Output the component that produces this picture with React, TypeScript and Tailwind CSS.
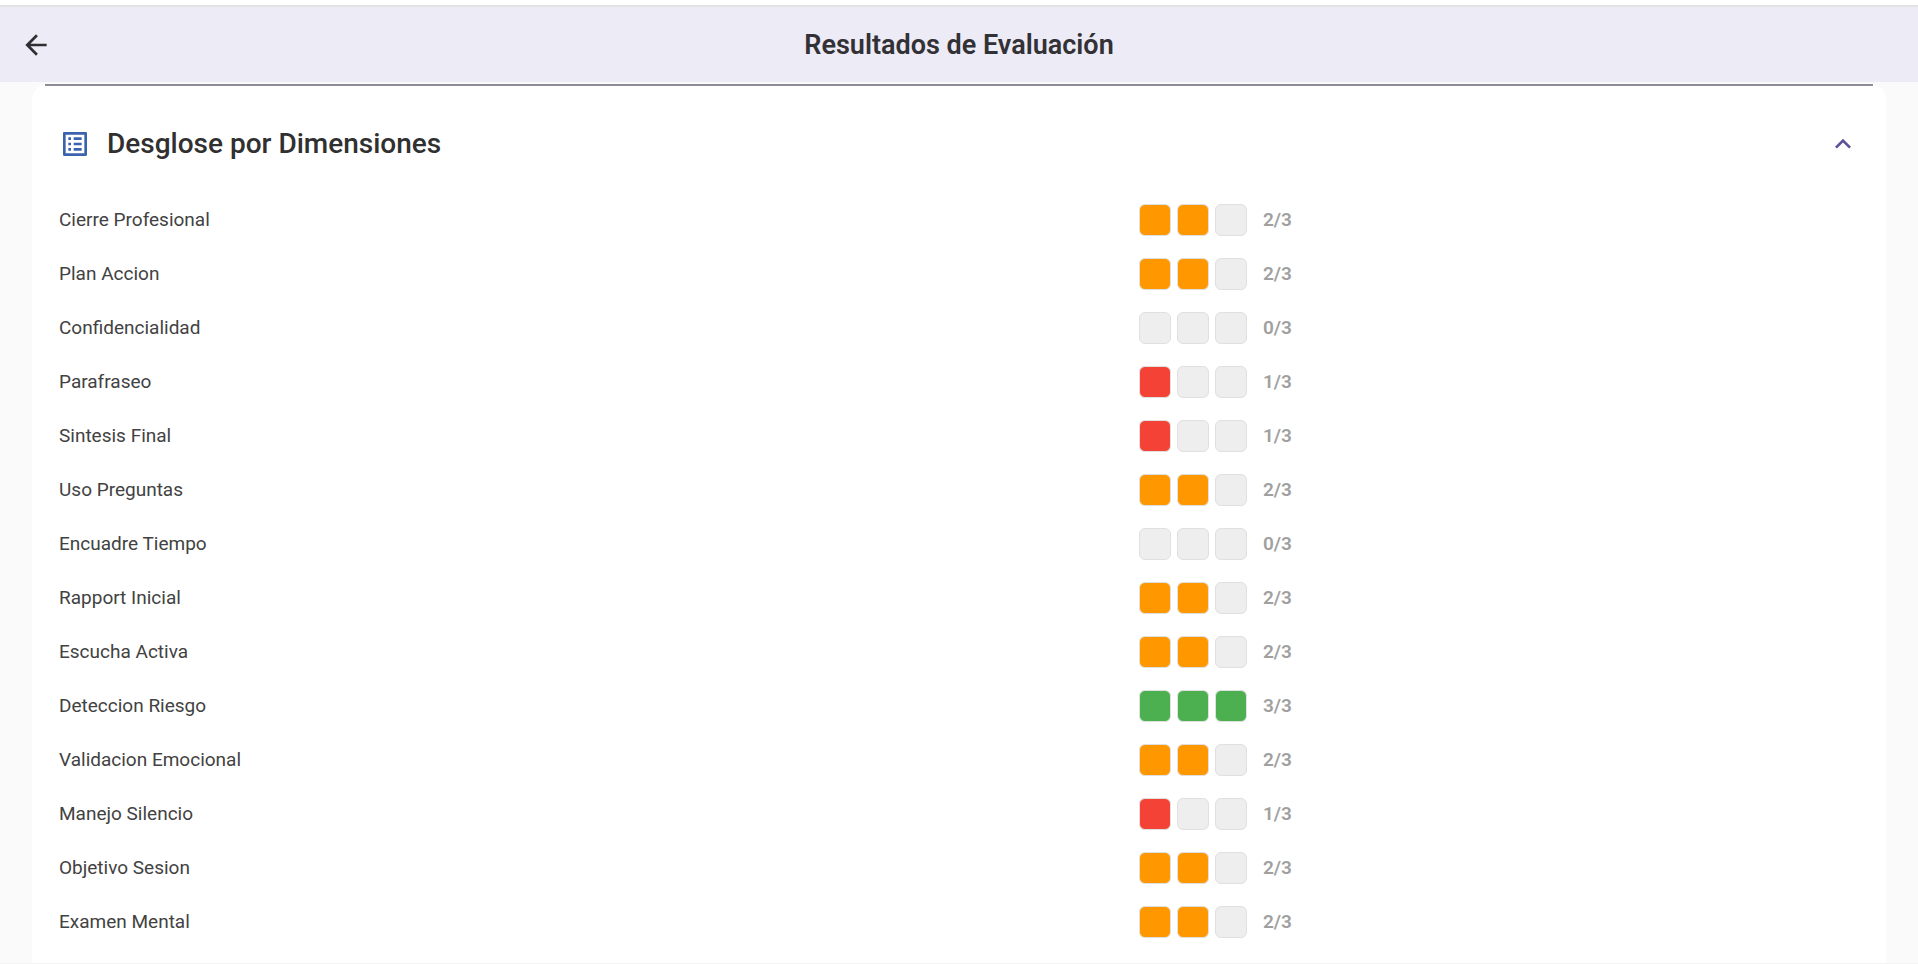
import { MdArrowBack, MdExpandLess, MdListAlt } from "react-icons/md"

interface Dimension {
  name: string
  score: number
}

const MAX_SCORE = 3

const dimensions: Dimension[] = [
  { name: "Cierre Profesional", score: 2 },
  { name: "Plan Accion", score: 2 },
  { name: "Confidencialidad", score: 0 },
  { name: "Parafraseo", score: 1 },
  { name: "Sintesis Final", score: 1 },
  { name: "Uso Preguntas", score: 2 },
  { name: "Encuadre Tiempo", score: 0 },
  { name: "Rapport Inicial", score: 2 },
  { name: "Escucha Activa", score: 2 },
  { name: "Deteccion Riesgo", score: 3 },
  { name: "Validacion Emocional", score: 2 },
  { name: "Manejo Silencio", score: 1 },
  { name: "Objetivo Sesion", score: 2 },
  { name: "Examen Mental", score: 2 },
]

const scoreColors = ["bg-[#eeeeee]", "bg-[#f44336]", "bg-[#ff9800]", "bg-[#4caf50]"]

function DimensionRow({ name, score }: Dimension) {
  return (
    <li className="grid grid-cols-[3fr_2fr] items-center py-[11px]">
      <span className="text-[19px] leading-8 text-[#424242]">{name}</span>
      <div className="flex items-center gap-1.5">
        {Array.from({ length: MAX_SCORE }, (_, i) => (
          <div
            key={i}
            className={`h-8 w-8 rounded-md border border-[#e0e0e0] ${i < score ? scoreColors[score] : scoreColors[0]}`}
          />
        ))}
        <span className="ml-2.5 text-[19px] leading-8 font-semibold text-[#a0a0a0]">
          {score}/{MAX_SCORE}
        </span>
      </div>
    </li>
  )
}

export default function App() {
  return (
    <div className="h-screen overflow-hidden bg-white pt-[5px] font-['Roboto',sans-serif]">
      <div className="flex h-full flex-col border-b border-[#f3f3f3] bg-[#fafafa]">
        <header className="grid shrink-0 grid-cols-[1fr_auto_1fr] items-center border-t-2 border-[#e2e2e5] bg-[#edebf5] px-5 pt-5 pb-[19px]">
          <button type="button" aria-label="Volver" className="w-8 text-[#2f2e33]">
            <MdArrowBack className="h-8 w-8" />
          </button>
          <h1 className="text-[27px] leading-9 font-semibold text-[#323136]">Resultados de Evaluación</h1>
        </header>

        <main className="min-h-0 flex-1 px-8 pt-0.5">
          <section className="h-full rounded-t-2xl bg-white px-[27px]">
            <hr className="-mx-3.5 border-t-2 border-[#8f8d94]" />
            <button type="button" aria-expanded="true" className="flex w-full items-center gap-4 pt-10 pb-[31px] text-left">
              <MdListAlt className="h-8 w-8 text-[#3a62ae]" />
              <h2 className="flex-1 text-[28px] leading-9 font-medium text-[#303030]">Desglose por Dimensiones</h2>
              <MdExpandLess className="h-8 w-8 text-[#5c519b]" />
            </button>
            <ul>
              {dimensions.map((dimension) => (
                <DimensionRow key={dimension.name} {...dimension} />
              ))}
            </ul>
          </section>
        </main>
      </div>
    </div>
  )
}
